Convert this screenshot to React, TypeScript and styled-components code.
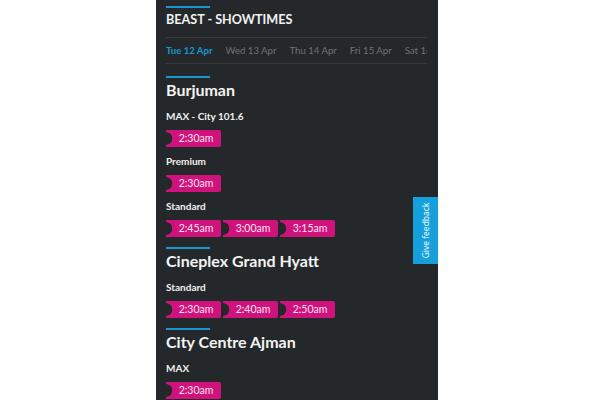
import styled, { createGlobalStyle } from "styled-components";

const GlobalStyle = createGlobalStyle`
  html, body {
    margin: 0;
    padding: 0;
    background: #ffffff;
  }
  body {
    font-family: "Lato", "Open Sans", sans-serif;
  }
`;

const Page = styled.div`
  position: relative;
  margin-left: 156px;
  width: 282px;
  height: 400px;
  box-sizing: border-box;
  padding: 0 10px;
  background: #25282a;
  overflow: hidden;
`;

const AccentBar = styled.div`
  width: 44px;
  height: 2px;
  background: #1b95d2;
  margin-top: ${(props: { $top: number }) => props.$top}px;
`;

const Title = styled.h1`
  margin: 4px 0 9px;
  font-size: 12.6px;
  line-height: 16px;
  font-weight: 700;
  color: #f2f2f2;
  text-transform: uppercase;
`;

const DateTabs = styled.div`
  display: flex;
  gap: 13px;
  height: 25px;
  align-items: center;
  border-top: 1px solid #373a3c;
  border-bottom: 1px solid #373a3c;
  white-space: nowrap;
  overflow: hidden;
  margin-right: 1px;
`;

const DateTab = styled.span<{ $active?: boolean }>`
  font-size: 9.6px;
  font-weight: ${(props) => (props.$active ? 700 : 400)};
  color: ${(props) => (props.$active ? "#1b95d2" : "#6f7274")};
  flex-shrink: 0;
`;

const Cinema = styled.section``;

const CinemaName = styled.h2`
  margin: 2px 0 0;
  font-size: 16px;
  line-height: 20px;
  font-weight: 700;
  color: #f4f4f4;
`;

const FormatLabel = styled.div`
  margin-top: ${(props: { $first?: boolean }) => (props.$first ? 9 : 7)}px;
  font-size: 10px;
  line-height: 14px;
  font-weight: 700;
  color: #f0f0f0;
`;

const TimeRow = styled.div`
  display: flex;
  gap: 2px;
  margin-top: 7px;
`;

const TimeButton = styled.button`
  width: 55px;
  height: 17px;
  padding: 0 0 0 5px;
  border: none;
  border-radius: 0 2px 2px 0;
  background: radial-gradient(circle at 0 50%, #25282a 6px, #d0127c 6.6px);
  color: #fbe6f1;
  font-family: inherit;
  font-size: 10.5px;
  line-height: 17px;
  text-align: center;
  cursor: pointer;
`;

const FeedbackTab = styled.div`
  position: absolute;
  right: 0;
  top: 197px;
  width: 25px;
  height: 67px;
  background: #159fdb;
  display: flex;
  align-items: center;
  justify-content: center;
  span {
    transform: rotate(-90deg);
    white-space: nowrap;
    color: #ffffff;
    font-size: 8.5px;
    font-family: "Open Sans", sans-serif;
  }
`;

interface IFormat {
  name: string;
  times: string[];
}

interface ICinema {
  name: string;
  formats: IFormat[];
}

const dates = ["Tue 12 Apr", "Wed 13 Apr", "Thu 14 Apr", "Fri 15 Apr", "Sat 16 Apr"];

const cinemas: ICinema[] = [
  {
    name: "Burjuman",
    formats: [
      { name: "MAX - City 101.6", times: ["2:30am"] },
      { name: "Premium", times: ["2:30am"] },
      { name: "Standard", times: ["2:45am", "3:00am", "3:15am"] },
    ],
  },
  {
    name: "Cineplex Grand Hyatt",
    formats: [{ name: "Standard", times: ["2:30am", "2:40am", "2:50am"] }],
  },
  {
    name: "City Centre Ajman",
    formats: [{ name: "MAX", times: ["2:30am"] }],
  },
];

function App() {
  return (
    <>
      <GlobalStyle />
      <Page>
        <AccentBar $top={6} />
        <Title>Beast - Showtimes</Title>
        <DateTabs>
          {dates.map((d, i) => (
            <DateTab key={d} $active={i === 0}>
              {d}
            </DateTab>
          ))}
        </DateTabs>
        {cinemas.map((cinema, ci) => (
          <Cinema key={cinema.name}>
            <AccentBar $top={ci === 0 ? 12 : 10} />
            <CinemaName>{cinema.name}</CinemaName>
            {cinema.formats.map((format, fi) => (
              <div key={format.name}>
                <FormatLabel $first={fi === 0}>{format.name}</FormatLabel>
                <TimeRow>
                  {format.times.map((t) => (
                    <TimeButton key={t}>{t}</TimeButton>
                  ))}
                </TimeRow>
              </div>
            ))}
          </Cinema>
        ))}
        <FeedbackTab>
          <span>Give feedback</span>
        </FeedbackTab>
      </Page>
    </>
  );
}

export default App;
